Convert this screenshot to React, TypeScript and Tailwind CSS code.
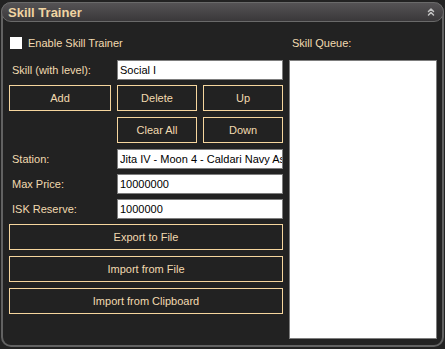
import React from 'react';
import { ChevronsUp } from 'lucide-react';

const tan = 'text-[#f2dab0]';

const Btn: React.FC<{ label: string; className?: string }> = ({ label, className = '' }) => (
  <button
    className={`h-[26px] border border-[#f6d69e] bg-[#222222] ${tan} text-[11px] leading-none ${className}`}
  >
    {label}
  </button>
);

const Field: React.FC<{ value: string }> = ({ value }) => (
  <input
    readOnly
    value={value}
    className="w-[166px] h-[20px] bg-white border border-[#7d7d7d] pl-[2px] text-[11px] text-black outline-none"
    style={{ fontFamily: '"Liberation Sans", Arial, sans-serif' }}
  />
);

const Row: React.FC<{ label: string; value: string; className?: string }> = ({ label, value, className = '' }) => (
  <div className={`flex items-center justify-between ${className}`}>
    <span className={`pl-[3px] ${tan} text-[11px]`}>{label}</span>
    <Field value={value} />
  </div>
);

export default function App() {
  return (
    <div
      className="w-[445px] h-[349px] bg-[#222222] pt-[2px] pl-[1px] overflow-hidden"
      style={{ fontFamily: '"Liberation Sans", Arial, sans-serif' }}
    >
      <div className="w-[443px] h-[345px] border-2 border-t-0 border-[#626262] rounded-[10px] bg-[#222222] flex flex-col">
        {/* title bar */}
        <div className="h-[20px] -mx-[2px] rounded-[10px] border border-[#6a6a6a] bg-gradient-to-b from-[#555355] to-[#3a383a] flex items-center pl-[6px] pr-[6px]">
          <span className="text-[13px] font-bold text-[#f0d4a2] leading-none">Skill Trainer</span>
          <ChevronsUp className="ml-auto text-[#c4c4c4]" size={12} strokeWidth={3} />
        </div>

        <div className="flex gap-[6px] pl-[6px] mt-[15px]">
          {/* left column */}
          <div className="w-[274px] flex flex-col">
            <div className="h-[12px] flex items-center gap-[6px] pl-[1px]">
              <div className="w-[12px] h-[12px] bg-white" />
              <span className={`${tan} text-[11px]`}>Enable Skill Trainer</span>
            </div>

            <Row label="Skill (with level):" value="Social I" className="mt-[11px]" />

            <div className="flex gap-[6px] mt-[5px]">
              <Btn label="Add" className="w-[102px]" />
              <Btn label="Delete" className="w-[80px]" />
              <Btn label="Up" className="w-[80px]" />
            </div>
            <div className="flex gap-[6px] mt-[6px] pl-[108px]">
              <Btn label="Clear All" className="w-[80px]" />
              <Btn label="Down" className="w-[80px]" />
            </div>

            <Row label="Station:" value="Jita IV - Moon 4 - Caldari Navy Assembly Plant" className="mt-[6px]" />
            <Row label="Max Price:" value="10000000" className="mt-[5px]" />
            <Row label="ISK Reserve:" value="1000000" className="mt-[5px]" />

            <Btn label="Export to File" className="w-full mt-[5px]" />
            <Btn label="Import from File" className="w-full mt-[6px]" />
            <Btn label="Import from Clipboard" className="w-full mt-[6px]" />
          </div>

          {/* right column */}
          <div className="w-[148px] flex flex-col">
            <div className="h-[12px] flex items-center pl-[3px]">
              <span className={`${tan} text-[11px]`}>Skill Queue:</span>
            </div>
            <div className="mt-[11px] h-[279px] bg-white border border-[#7d7d7d]" />
          </div>
        </div>
      </div>
    </div>
  );
}
